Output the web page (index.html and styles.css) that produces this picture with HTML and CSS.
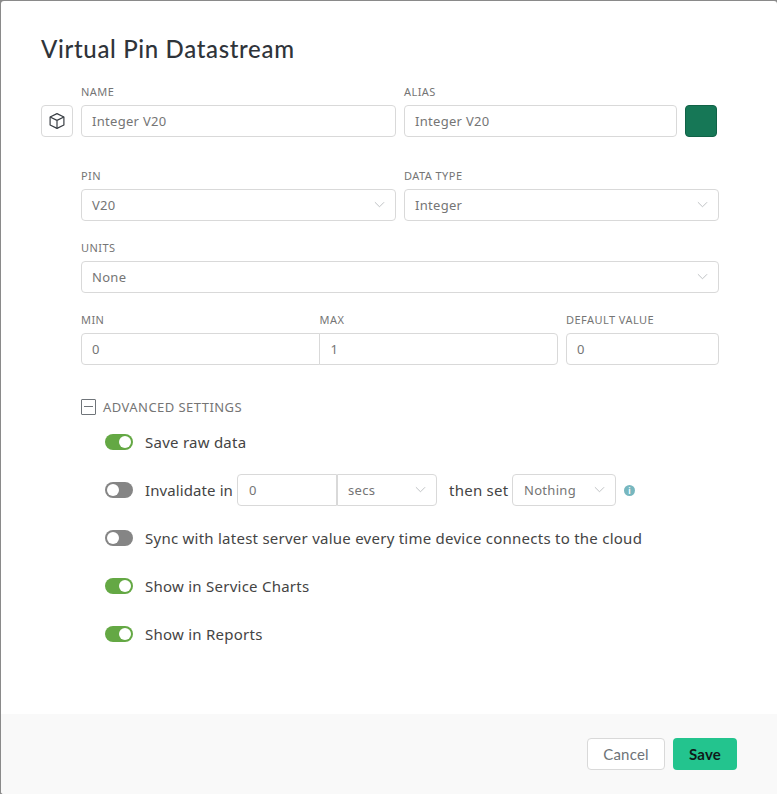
FILE: index.html
```html
<!DOCTYPE html>
<html lang="en">
<head>
  <meta charset="UTF-8" />
  <title>Virtual Pin Datastream</title>
  <link rel="stylesheet" href="styles.css">
</head>
<body>
  <div class="modal">
    <div class="modal-body">
      <h1>Virtual Pin Datastream</h1>

      <div class="row row-name">
        <button class="icon-btn" type="button" aria-label="Choose icon">
          <svg width="18" height="18" viewBox="0 0 18 18" fill="none" stroke="#3a3f45" stroke-width="1.2" stroke-linejoin="round">
            <path d="M9 1.6 15.9 5v8L9 16.4 2.1 13V5z"/>
            <path d="M2.1 5 9 8.4 15.9 5M9 8.4v8"/>
          </svg>
        </button>
        <div class="field grow-name">
          <label>NAME</label>
          <div class="input">Integer V20</div>
        </div>
        <div class="field grow-alias">
          <label>ALIAS</label>
          <div class="input">Integer V20</div>
        </div>
        <div class="swatch"></div>
      </div>

      <div class="indent">
        <div class="row row-pin">
          <div class="field grow-name">
            <label>PIN</label>
            <div class="input select">V20<svg class="chev" viewBox="0 0 12 7"><path d="M1 1l5 5 5-5"/></svg></div>
          </div>
          <div class="field grow-type">
            <label>DATA TYPE</label>
            <div class="input select">Integer<svg class="chev" viewBox="0 0 12 7"><path d="M1 1l5 5 5-5"/></svg></div>
          </div>
        </div>

        <div class="field field-units">
          <label>UNITS</label>
          <div class="input select">None<svg class="chev" viewBox="0 0 12 7"><path d="M1 1l5 5 5-5"/></svg></div>
        </div>

        <div class="row row-range">
          <div class="joined">
            <div class="field">
              <label>MIN</label>
              <div class="input">0</div>
            </div>
            <div class="field">
              <label>MAX</label>
              <div class="input">1</div>
            </div>
          </div>
          <div class="field field-default">
            <label>DEFAULT VALUE</label>
            <div class="input">0</div>
          </div>
        </div>

        <div class="advanced-head">
          <span class="collapse-box"></span>
          <span>ADVANCED SETTINGS</span>
        </div>

        <ul class="settings">
          <li><span class="toggle on"></span>Save raw data</li>
          <li>
            <span class="toggle"></span><span class="inv-label">Invalidate in</span>
            <div class="inline-group">
              <div class="input inline-num">0</div>
              <div class="input select inline-unit">secs<svg class="chev" viewBox="0 0 12 7"><path d="M1 1l5 5 5-5"/></svg></div>
            </div>
            <span class="then">then set</span>
            <div class="input select inline-then">Nothing<svg class="chev" viewBox="0 0 12 7"><path d="M1 1l5 5 5-5"/></svg></div>
            <span class="info">i</span>
          </li>
          <li><span class="toggle"></span>Sync with latest server value every time device connects to the cloud</li>
          <li><span class="toggle on"></span>Show in Service Charts</li>
          <li><span class="toggle on"></span>Show in Reports</li>
        </ul>
      </div>
    </div>

    <div class="modal-footer">
      <button class="btn btn-cancel" type="button">Cancel</button>
      <button class="btn btn-save" type="button">Save</button>
    </div>
  </div>
</body>
</html>
```
FILE: styles.css
```css
* { margin:0; padding:0; box-sizing:border-box; font-family:"Noto Sans", "Open Sans", sans-serif; }
html, body { height:100%; }
body { background:#8a8a8a; padding:1px 0 0 1px; overflow:hidden; }

.modal { background:#fff; height:793px; border-radius:3px 3px 0 3px; display:flex; flex-direction:column; overflow:hidden; }
.modal-body { flex:1; padding:32px 40px 0; }
h1 { font-family:Lato, sans-serif; font-size:24px; line-height:32px; font-weight:500; color:#2f343a; letter-spacing:0.66px; margin-bottom:20px; }

.row { display:flex; gap:8px; align-items:flex-end; }
.field { display:flex; flex-direction:column; }
label { font-size:11px; line-height:14px; color:#757575; margin-bottom:6px; letter-spacing:0.45px; }
.input { position:relative; height:32px; border:1px solid #d9d9d9; border-radius:4px; background:#fff; padding:0 10px; font-size:13px; line-height:30px; letter-spacing:0.3px; color:#757575; }
.chev { position:absolute; right:10px; top:11px; width:11px; height:7px; fill:none; stroke:#b9bcbf; stroke-width:1; }

.icon-btn { width:32px; height:32px; border:1px solid #d9d9d9; border-radius:4px; background:#fff; display:flex; align-items:center; justify-content:center; }
.grow-name { width:315px; }
.grow-alias { width:273px; }
.swatch { width:32px; height:32px; border-radius:4px; background:#167756; border:1px solid #116247; }

.indent { padding-left:40px; }
.row-pin { margin-top:32px; width:638px; }
.grow-type { width:315px; }
.field-units { margin-top:20px; width:638px; }
.row-range { margin-top:20px; width:638px; }
.joined { display:flex; width:477px; }
.joined .field { width:50%; }
.joined .input { border-radius:4px 0 0 4px; }
.joined .field + .field .input { border-radius:0 4px 4px 0; margin-left:-1px; padding-left:11px; }
.field-default { width:153px; }

.advanced-head { display:flex; align-items:center; gap:7px; margin-top:34px; height:16px; font-size:13px; letter-spacing:0.45px; color:#757575; }
.collapse-box { position:relative; width:15px; height:16px; border:1px solid #6f7479; border-radius:1px; }
.collapse-box::after { content:""; position:absolute; left:2px; right:2px; top:6px; height:1px; background:#6f7479; }

.settings { list-style:none; margin-top:3px; padding-left:24px; }
.settings li { display:flex; align-items:center; height:48px; font-size:15px; color:#444; letter-spacing:0.25px; white-space:nowrap; }
.toggle { position:relative; flex:none; width:28px; height:16px; border-radius:8px; background:#858585; margin-right:12px; }
.toggle::after { content:""; position:absolute; left:2px; top:2px; width:12px; height:12px; border-radius:50%; background:#fff; }
.toggle.on { background:#64a844; }
.toggle.on::after { left:14px; }

.inv-label { width:92px; letter-spacing:0.1px; }
.inline-group { display:flex; }
.inline-num { width:100px; border-radius:4px 0 0 4px; padding-left:11px; }
.inline-unit { width:100px; border-radius:0 4px 4px 0; }
.then { width:75px; padding-left:12px; }
.inline-then { width:104px; padding-left:11px; }
.info { width:11px; height:11px; margin-left:8px; border-radius:50%; background:#77b7bf; color:#fff; font-size:8px; line-height:11px; font-weight:700; text-align:center; letter-spacing:0; }

.modal-footer { height:80px; flex:none; background:#f9f9f9; display:flex; justify-content:flex-end; gap:8px; padding:24px 40px 0 0; }
.btn { height:32px; border-radius:4px; font-family:Lato, sans-serif; font-size:15px; letter-spacing:0.2px; }
.btn-cancel { width:78px; background:#fff; border:1px solid #d9d9d9; color:#6e7378; }
.btn-save { width:64px; background:#23c48e; border:none; color:#10191a; font-weight:700; }
```
